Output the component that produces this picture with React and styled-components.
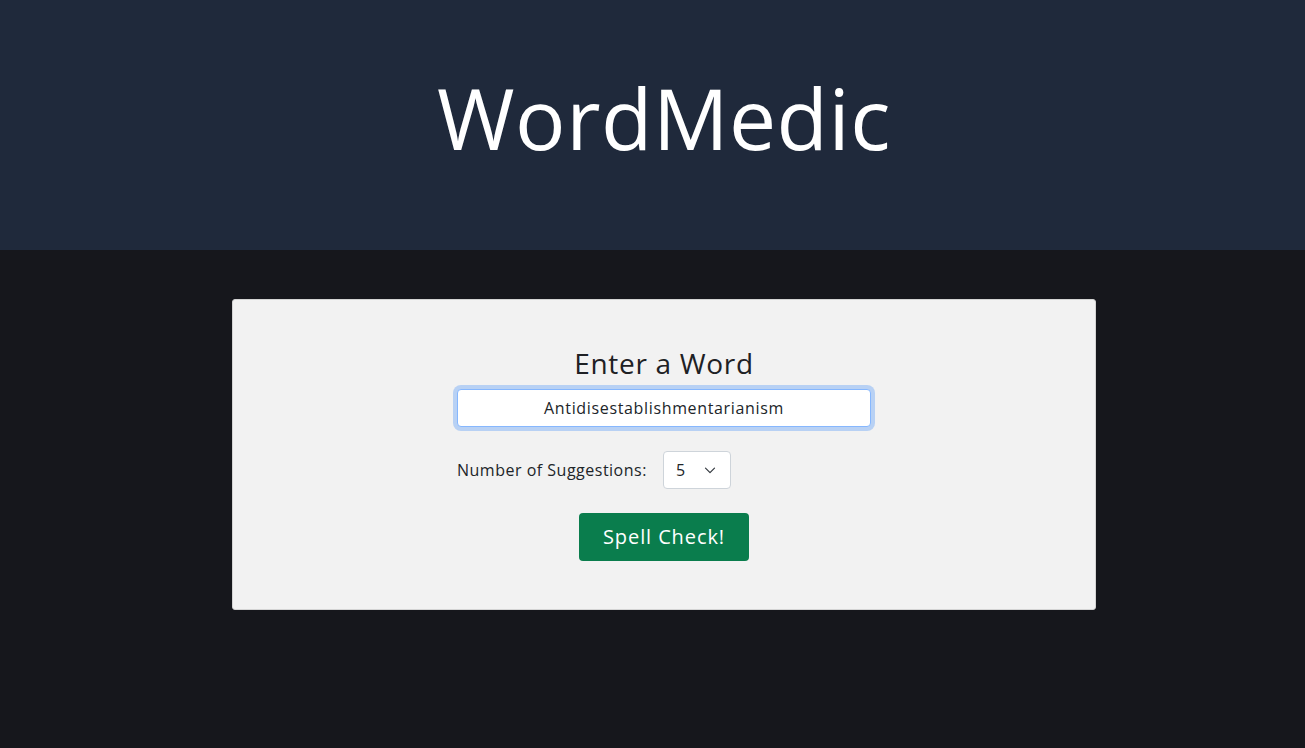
import React, { useState } from 'react';
import styled, { createGlobalStyle } from 'styled-components';

const GlobalStyle = createGlobalStyle`
    html, body {
        margin: 0;
        padding: 0;
        background: #16171c;
    }
    body {
        font-family: "Open Sans", "Liberation Sans", sans-serif;
        color: #212529;
    }
`;

const Page = styled.div`
    min-height: 748px;
    background: #16171c;
`;

const Header = styled.header`
    height: 250px;
    background: #1f293b;
    display: flex;
    align-items: center;
    justify-content: center;
    padding-left: 23px;
    box-sizing: border-box;
`;

const Title = styled.h1`
    margin: 0 0 16px;
    font-size: 84px;
    font-weight: 400;
    color: #ffffff;
    letter-spacing: 0.5px;
`;

const Main = styled.main`
    display: flex;
    justify-content: center;
    padding: 49px 0 0 23px;
`;

const Card = styled.section`
    width: 864px;
    box-sizing: border-box;
    background: #f2f2f2;
    border: 1px solid #d4d4d4;
    border-radius: 3px;
    padding: 47px 0 48px;
    display: flex;
    flex-direction: column;
    align-items: center;
`;

const Form = styled.form`
    width: 414px;
    display: flex;
    flex-direction: column;
    align-items: center;
`;

const Heading = styled.h3`
    margin: 0 0 8px;
    font-size: 28px;
    font-weight: 400;
    line-height: 1.2;
    letter-spacing: 0.7px;
    color: #1e2124;
`;

const WordInput = styled.input`
    width: 100%;
    height: 38px;
    box-sizing: border-box;
    border: 1px solid #86b7fe;
    border-radius: 4px;
    box-shadow: 0 0 0 4px rgba(13, 110, 253, 0.25);
    background: #fff;
    text-align: center;
    font-family: inherit;
    font-size: 16px;
    letter-spacing: 0.65px;
    color: #212529;
    outline: none;
`;

const Row = styled.div`
    width: 100%;
    display: flex;
    align-items: center;
    gap: 16px;
    margin-top: 24px;
`;

const Label = styled.label`
    font-size: 16px;
    letter-spacing: 0.5px;
    color: #212529;
`;

const SelectBox = styled.div`
    position: relative;
    width: 68px;
    height: 38px;
`;

const Select = styled.select`
    appearance: none;
    width: 100%;
    height: 100%;
    box-sizing: border-box;
    border: 1px solid #ced4da;
    border-radius: 4px;
    background: #fff;
    padding: 0 0 0 12px;
    font-family: inherit;
    font-size: 16px;
    color: #212529;
    outline: none;
`;

const Chevron = styled.svg`
    position: absolute;
    right: 15px;
    top: 13px;
    pointer-events: none;
`;

const Button = styled.button`
    margin-top: 24px;
    width: 170px;
    height: 48px;
    border: none;
    border-radius: 4px;
    background: #0a7d4d;
    color: #fff;
    font-family: inherit;
    font-size: 20px;
    letter-spacing: 0.9px;
    cursor: pointer;
`;

const App = () => {
    const [word, setWord] = useState('Antidisestablishmentarianism');
    const [count, setCount] = useState('5');

    return (
        <Page>
            <GlobalStyle />
            <Header>
                <Title>WordMedic</Title>
            </Header>
            <Main>
                <Card>
                    <Form onSubmit={e => e.preventDefault()}>
                        <Heading>Enter a Word</Heading>
                        <WordInput value={word} onChange={e => setWord(e.target.value)} />
                        <Row>
                            <Label htmlFor="count">Number of Suggestions:</Label>
                            <SelectBox>
                                <Select id="count" value={count} onChange={e => setCount(e.target.value)}>
                                    {[1, 2, 3, 4, 5, 6, 7, 8, 9, 10].map(n => (
                                        <option key={n} value={n}>{n}</option>
                                    ))}
                                </Select>
                                <Chevron width="12" height="12" viewBox="0 0 16 16">
                                    <path d="M2 5.5l6 6 6-6" fill="none" stroke="#343a40" strokeWidth="1.6" strokeLinecap="round" strokeLinejoin="round" />
                                </Chevron>
                            </SelectBox>
                        </Row>
                        <Button type="submit">Spell Check!</Button>
                    </Form>
                </Card>
            </Main>
        </Page>
    );
};

export default App;
